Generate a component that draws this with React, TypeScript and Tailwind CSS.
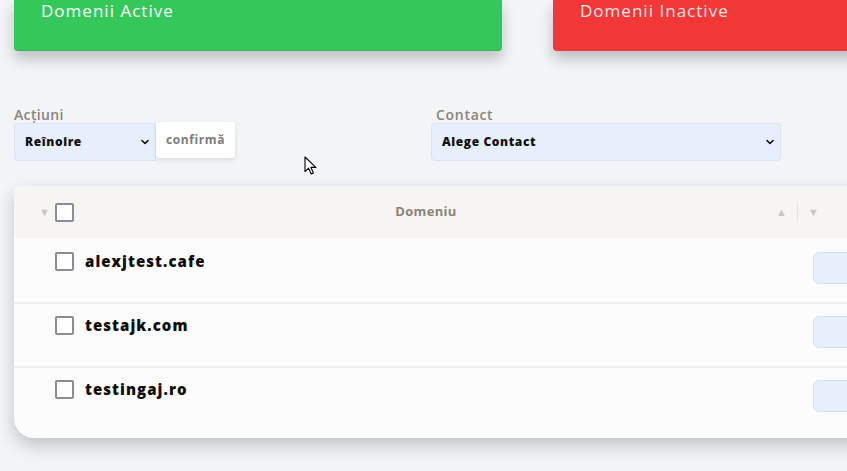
import React from 'react';

const domains = ['alexjtest.cafe', 'testajk.com', 'testingaj.ro'];

function Chevron() {
  return (
    <svg width="10" height="10" viewBox="0 0 10 10" className="shrink-0">
      <path d="M2 3.5 L5 6.5 L8 3.5" fill="none" stroke="#111" strokeWidth="1.6" strokeLinecap="round" strokeLinejoin="round" />
    </svg>
  );
}

function Checkbox() {
  return <div className="w-[19px] h-[19px] rounded-[2px] border-2 border-[#8e8b98] bg-white shrink-0" />;
}

export default function App() {
  return (
    <div
      className="relative w-[847px] h-[471px] overflow-hidden bg-[#f3f4f8]"
      style={{ fontFamily: '"Open Sans", "Noto Sans", sans-serif' }}
    >
      <div className="w-[1100px] pl-[14px]">
        {/* stat cards */}
        <div className="flex gap-[51px]">
          <div className="w-[488px] h-[51px] bg-[#34c85a] rounded-b-[4px] border-b border-[#2fb752] shadow-[0_8px_14px_rgba(0,0,0,0.22)] pl-[27px]">
            <div className="text-white text-[17px] leading-[22px] tracking-[0.06em]">Domenii Active</div>
          </div>
          <div className="w-[488px] h-[51px] bg-[#f23737] rounded-b-[4px] shadow-[0_8px_14px_rgba(0,0,0,0.22)] pl-[27px]">
            <div className="text-[#fde6ea] text-[17px] leading-[22px] tracking-[0.06em]">Domenii Inactive</div>
          </div>
        </div>

        {/* filters */}
        <div className="flex mt-[56px]">
          <div className="w-[417px]">
            <div className="text-[14px] leading-[16px] font-semibold text-[#8c8478] tracking-wide">Acțiuni</div>
            <div className="flex items-start">
              <div className="w-[142px] h-[38px] bg-[#e8effc] border border-[#dbe3f0] rounded-l-[4px] flex items-center justify-between pl-[10px] pr-[5px]">
                <span className="text-[12px] font-extrabold text-[#111] tracking-wider">Reînoire</span>
                <Chevron />
              </div>
              <div className="w-[79px] h-[36px] -mt-px flex items-center justify-center bg-white rounded-[4px] shadow-[0_2px_5px_rgba(0,0,0,0.1)] text-[12px] font-bold text-[#7d7b80] tracking-wider">
                confirmă
              </div>
            </div>
          </div>
          <div>
            <div className="pl-[5px] text-[14px] leading-[16px] font-semibold text-[#8c8478] tracking-wider">Contact</div>
            <div className="w-[350px] h-[38px] bg-[#e8effc] border border-[#dbe3f0] rounded-[4px] flex items-center justify-between pl-[10px] pr-[5px]">
              <span className="text-[12px] font-extrabold text-[#111] tracking-wider">Alege Contact</span>
              <Chevron />
            </div>
          </div>
        </div>

        {/* table */}
        <div className="mt-[25px] w-[1000px] bg-[#fcfcfc] rounded-[20px] rounded-t-[6px] shadow-[0_8px_18px_rgba(0,0,0,0.2)] overflow-hidden">
          <div className="h-[52px] bg-[#f6f5f3] flex items-center">
            <span className="w-[41px] text-right pr-[5px] text-[11px] text-[#c9c5bf]">▼</span>
            <Checkbox />
            <div className="w-[682px] ml-[11px] text-center text-[13px] font-bold text-[#8c8478] tracking-wide">Domeniu</div>
            <div className="flex items-center ml-[9px] text-[11px] text-[#c9c5bf]">
              <span>▲</span>
              <span className="w-px h-[20px] bg-[#e6e3de] mx-[10px]" />
              <span>▼</span>
            </div>
          </div>
          {domains.map((d, i) => (
            <div
              key={d}
              className={`flex items-start ${i === 0 ? 'pt-[14px]' : 'pt-[12px] border-t-2 border-[#eeeeee]'} ${i === domains.length - 1 ? 'h-[72px]' : 'h-[64px]'}`}
            >
              <div className="w-[41px]" />
              <Checkbox />
              <div className="w-[728px] ml-[11px] text-[15px] leading-[19px] font-extrabold text-[#0d0d0d] tracking-[0.07em]">{d}</div>
              <div className="w-[60px] h-[32px] bg-[#e8effc] border border-[#dbe3f0] rounded-[6px]" />
            </div>
          ))}
        </div>
      </div>

      {/* mouse cursor */}
      <svg className="absolute left-[304px] top-[156px]" width="14" height="20" viewBox="0 0 14 20">
        <path d="M1 1 L1 15.5 L4.6 12.2 L7.2 18 L9.4 17 L6.9 11.4 L11.8 11.4 Z" fill="#fff" stroke="#000" strokeWidth="1.1" strokeLinejoin="round" />
      </svg>
    </div>
  );
}
